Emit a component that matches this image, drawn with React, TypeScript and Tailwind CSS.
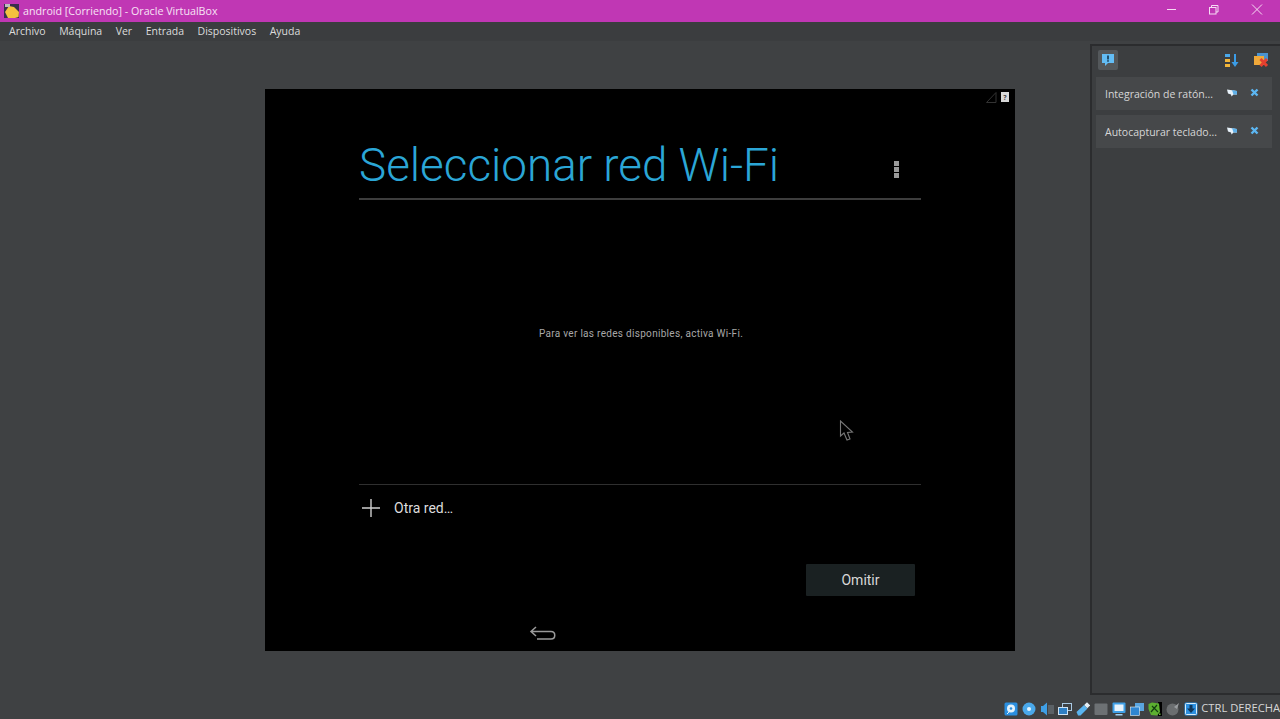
import React from 'react';

const FONT = "font-['Open_Sans','Noto_Sans',sans-serif]";
const MENU = ['Archivo', 'Máquina', 'Ver', 'Entrada', 'Dispositivos', 'Ayuda'];
const NOTES = ['Integración de ratón...', 'Autocapturar teclado...'];

const AppIcon = () => (
  <svg width="18" height="18" viewBox="0 0 18 18">
    <rect x="1" y="2" width="15" height="14" fill="#3a2f4c" />
    <path d="M2 10 L6 4 L11 5 L16 10 L15.5 15 L12 16 L5 16 Z" fill="#f4c23f" />
    <rect x="2" y="2" width="5" height="3" fill="#bdbdbd" />
  </svg>
);

const NoteIcon = () => (
  <svg width="10" height="8" viewBox="0 0 10 8">
    <path d="M0 0.5 L10 2 V5.5 H6.5 L4.5 7.5 L4 5.5 L1 4.5 Z" fill="#e8f2fa" />
    <path d="M5 1 L10 2 V5.5 H6.5 Z" fill="#5fb0e8" />
  </svg>
);

const CloseIcon = () => (
  <svg width="9" height="9" viewBox="0 0 9 9">
    <path d="M1.5 1.5 L7.5 7.5 M7.5 1.5 L1.5 7.5" stroke="#5cb6f2" strokeWidth="2.4" />
  </svg>
);

const StatusIcons = () => (
  <div className="flex items-center gap-[4px]">
    <svg width="14" height="14" viewBox="0 0 14 14">
      <rect x="0.5" y="0.5" width="13" height="13" rx="1.5" fill="#2b8fe0" />
      <circle cx="7" cy="6.5" r="4" fill="#e4f2fb" />
      <circle cx="7" cy="6.5" r="1.3" fill="#2b8fe0" />
      <path d="M3 12 L6 9" stroke="#e4f2fb" />
    </svg>
    <svg width="14" height="14" viewBox="0 0 14 14">
      <circle cx="7" cy="7" r="6.5" fill="#4aa8ea" />
      <circle cx="7" cy="7" r="2" fill="#e6f4fd" />
    </svg>
    <svg width="14" height="14" viewBox="0 0 14 14">
      <path d="M1 4 H3 L7 0.5 V13.5 L3 10 H1 Z" fill="#3f9fe6" />
      <rect x="8" y="3" width="6" height="9" fill="#5b6166" />
    </svg>
    <svg width="14" height="14" viewBox="0 0 14 14">
      <rect x="4.5" y="1.5" width="9" height="7" fill="#3f4143" stroke="#a9c9e4" />
      <rect x="0.5" y="5.5" width="9" height="7" fill="#2f7fc4" stroke="#cfe3f3" />
    </svg>
    <svg width="14" height="14" viewBox="0 0 14 14">
      <path d="M0.5 10 L8 3 L11.5 6.5 L4.5 13.5 L2 13.5 Z" fill="#59b4f0" />
      <rect x="9" y="1" width="4.5" height="4" fill="#e4eef5" transform="rotate(45 11 3)" />
    </svg>
    <svg width="14" height="14" viewBox="0 0 14 14">
      <rect x="0.5" y="1.5" width="13" height="11.5" rx="1" fill="#6d7174" />
    </svg>
    <svg width="14" height="14" viewBox="0 0 14 14">
      <rect x="0.5" y="0.5" width="13" height="10.5" rx="1" fill="#3f9fe6" />
      <rect x="2.5" y="2.5" width="9" height="6.5" fill="#e8f3fb" />
      <rect x="3.5" y="12" width="7" height="1.5" fill="#9fd0f2" />
    </svg>
    <svg width="14" height="14" viewBox="0 0 14 14">
      <rect x="5" y="1" width="9" height="8" fill="#5aa5e0" />
      <rect x="0.5" y="5" width="9" height="8.5" fill="#2f86d2" stroke="#e8f3fb" strokeWidth="0.6" />
    </svg>
    <svg width="14" height="14" viewBox="0 0 14 14">
      <rect x="10" y="0" width="4" height="14" fill="#000" />
      <rect x="11" y="11.5" width="1.5" height="1.5" fill="#6fc040" />
      <path d="M0.5 2 L4 0.5 L11 1.5 L12 10 L9 13.5 L3 13 L0.5 7 Z" fill="#5cb030" />
      <path d="M3 10 L9 3 M4 4 L10 10" stroke="#123d10" strokeWidth="1.2" />
    </svg>
    <svg width="14" height="14" viewBox="0 0 14 14">
      <circle cx="6.5" cy="7.5" r="6" fill="#6b6e70" />
      <path d="M8 5 L13 1 L11 7 Z" fill="#9a9da0" />
    </svg>
    <svg width="14" height="14" viewBox="0 0 14 14">
      <rect x="0.5" y="0.5" width="13" height="13" rx="1.5" fill="#2b8fe0" />
      <path d="M5.5 3 H8.5 V6.5 H11 L7 11 L3 6.5 H5.5 Z" fill="#10365a" />
      <rect x="1.5" y="1.5" width="11" height="11" rx="1" fill="none" stroke="#d6ebfa" />
    </svg>
  </div>
);

export default function App() {
  return (
    <div className={`flex h-[719px] w-[1280px] flex-col overflow-hidden bg-[#3f4143] ${FONT}`}>
      {/* title bar */}
      <div className="flex h-[22px] items-center bg-[#c037b4] pl-[3px] text-[#f7e3f5]">
        <AppIcon />
        <span className="ml-[2px] text-[10.7px]">android [Corriendo] - Oracle VirtualBox</span>
        <div className="ml-auto flex items-center">
          <svg width="150" height="22" viewBox="0 0 150 22" fill="none" stroke="#f6dcf3" strokeWidth="1">
            <path d="M37 9.5 H46" />
            <rect x="79.5" y="7.5" width="6.5" height="6.5" />
            <path d="M81.5 7.5 V5.5 H88 V12 H86" />
            <path d="M122 4.5 L132 14.5 M132 4.5 L122 14.5" />
          </svg>
        </div>
      </div>

      {/* menu bar */}
      <div className="flex h-[19px] items-center gap-[13.5px] bg-[#3b3d3f] pl-[9px] text-[10.5px] text-[#dcdcdc]">
        {MENU.map(item => (
          <span key={item}>{item}</span>
        ))}
      </div>

      <div className="flex min-h-0 flex-1">
        {/* guest screen */}
        <div className="flex-1 pl-[265px] pt-[48px]">
          <div className="relative flex h-[562px] w-[750px] flex-col bg-black pl-[94px] pr-[94px]">
            <div className="absolute right-[6px] top-[3px] flex items-start gap-[4px]">
              <svg width="11" height="11" viewBox="0 0 11 11">
                <path d="M10 0.5 V10.5 H0.5 Z" fill="none" stroke="#333" />
              </svg>
              <span className="flex h-[10px] w-[8px] items-center justify-center bg-[#d8d8d8] text-[7px] font-bold leading-none text-[#444]">?</span>
            </div>

            <div className="flex h-[111px] items-end justify-between border-b-2 border-[#3d3d3d]">
              <span className="mb-[9px] font-['Roboto',sans-serif] text-[45.8px] font-light leading-none text-[#2ba6d6]">Seleccionar red Wi-Fi</span>
              <div className="mb-[20px] mr-[22px] flex flex-col gap-[1px]">
                <span className="h-[5px] w-[5px] bg-[#9a9a9a]" />
                <span className="h-[5px] w-[5px] bg-[#9a9a9a]" />
                <span className="h-[5px] w-[5px] bg-[#9a9a9a]" />
              </div>
            </div>

            <div className="relative flex h-[285px] items-center justify-center border-b border-[#2f2f2f] pb-[17px] pl-[2px] font-['Roboto',sans-serif] text-[10px] tracking-[0.3px] text-[#a8a8a8]">
              Para ver las redes disponibles, activa Wi-Fi.
              <svg className="absolute left-[480px] top-[220px]" width="16" height="22" viewBox="0 0 16 22" fill="none" stroke="#777" strokeWidth="1.1">
                <path d="M1.5 1 V16 L5 13 L8 20 L11 19 L8.5 12.5 L13.5 12 Z" />
              </svg>
            </div>

            <div className="mt-[11px] flex items-center font-['Roboto',sans-serif] text-[14px] text-[#dddddd]">
              <svg width="24" height="24" viewBox="0 0 24 24" stroke="#cfcfcf" strokeWidth="1.4">
                <path d="M12 3 V21 M3 12 H21" />
              </svg>
              <span className="ml-[11px]">Otra red…</span>
            </div>

            <div className="mr-[6px] mt-[44px] flex justify-end">
              <button className="h-[32px] w-[109px] rounded-[1px] bg-[#1a2122] font-['Roboto',sans-serif] text-[14px] text-[#d8d8d8]">Omitir</button>
            </div>

            <svg className="absolute bottom-[8px] left-[264px]" width="28" height="18" viewBox="0 0 28 18" fill="none" stroke="#9a9a9a" strokeWidth="1.5">
              <path d="M7 2 L2 6.5 L7 11 M2 6.5 H22 C27 6.5 27 14 22 14 H8" />
            </svg>
          </div>
        </div>

        {/* notification center */}
        <div className="mt-[3px] flex w-[190px] flex-col border-b-2 border-l-2 border-t-2 border-[#2b2c2e] bg-[#3c3e40] pl-[4px] pr-[8px]">
          <div className="flex h-[31px] items-center justify-between pb-[3px]">
            <span className="ml-[2px] flex h-[20px] w-[20px] items-center justify-center rounded-[2px] bg-[#54585b]">
              <svg width="14" height="14" viewBox="0 0 14 14">
                <path d="M1 1 H13 V10 H7 L4 13 V10 H1 Z" fill="#63bdf5" />
                <rect x="6.2" y="2.5" width="1.6" height="4" fill="#14364e" />
                <rect x="6.2" y="7.2" width="1.6" height="1.5" fill="#14364e" />
              </svg>
            </span>
            <div className="mr-[3px] flex items-center gap-[14px]">
              <svg width="15" height="15" viewBox="0 0 15 15">
                <rect x="1" y="1" width="5" height="3" fill="#4aa8ea" />
                <rect x="1" y="6" width="5" height="3" fill="#f2b53a" />
                <rect x="1" y="11" width="5" height="3" fill="#f2b53a" />
                <path d="M10 1 H12 V9 H14.5 L11 14 L7.5 9 H10 Z" fill="#3b9ce6" />
              </svg>
              <svg width="16" height="16" viewBox="0 0 16 16">
                <rect x="4" y="1" width="11" height="8" fill="#4a93cf" />
                <rect x="1" y="4" width="10" height="9" fill="#f0a93a" />
                <path d="M7.5 7 L14 14 M14 7 L7.5 14" stroke="#e5402f" strokeWidth="3" />
              </svg>
            </div>
          </div>

          <div className="flex flex-col gap-[5px]">
            {NOTES.map(text => (
              <div key={text} className="flex h-[33px] items-center bg-[#46484a] pl-[9px] text-[10.5px] text-[#d6d6d6]">
                <span className="w-[122px] whitespace-nowrap pt-[2px]">{text}</span>
                <span className="-mt-[2px] flex"><NoteIcon /></span>
                <span className="-mt-[2px] ml-[13px] flex"><CloseIcon /></span>
              </div>
            ))}
          </div>
        </div>
      </div>

      {/* status bar */}
      <div className="flex h-[24px] items-center justify-end gap-[3px] pt-[3px] text-[11.2px] text-[#d6d6d6]">
        <StatusIcons />
        <span className="whitespace-nowrap">CTRL DERECHA</span>
      </div>
    </div>
  );
}
